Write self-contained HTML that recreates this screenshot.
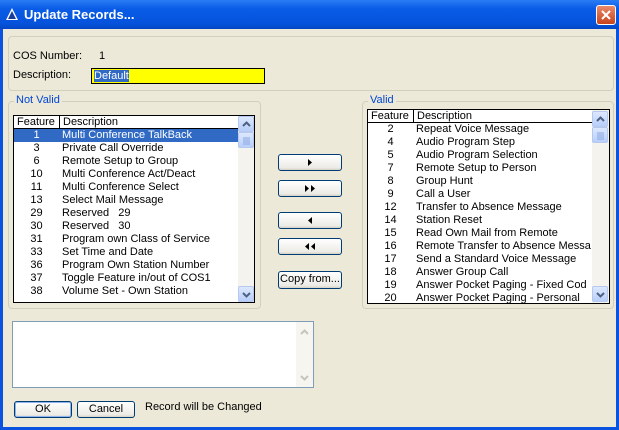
<!DOCTYPE html>
<html><head><style>
*{margin:0;padding:0;box-sizing:border-box}
body{width:619px;height:430px;overflow:hidden;background:#0a53e0;font-family:"Liberation Sans",sans-serif;font-size:11px;color:#000;position:relative}
.a{position:absolute}
#title{left:0;top:0;width:619px;height:29px;background:linear-gradient(#2a7cf4,#0a5ce6 30%,#0553dc 80%,#0346c4);}
#client{left:3px;top:29px;width:613px;height:398px;background:#ece9d8}
.grp{border:1px solid #d0d0bf;border-radius:4px}
.leg{background:#ece9d8;color:#0046d5;padding:0 2px}
.list{background:#fff;border:1px solid #000;overflow:hidden}
.hdr{height:13px;border-bottom:1px solid #000;position:relative;line-height:12px}
.row{height:13px;line-height:13px;position:relative;white-space:nowrap}
.row .n{position:absolute;left:0;text-align:center}
.row .d{position:absolute}
.sel{background:#316ac5;color:#fff}
.sb{background:#f4f3ee;}
.sbtn{width:16px;height:16px;border:1px solid #b5c8f0;border-radius:2px;background:linear-gradient(#dde8fe,#b8cef9)}
.sbtn svg{position:absolute;left:3px;top:3px}
.btn{border:1px solid #003c74;border-radius:3px;background:linear-gradient(#fff,#ecebe6 85%,#d6d0c5);text-align:center;line-height:15px}
</style></head><body>
<div id="title" class="a">
<svg class="a" style="left:5px;top:7px" width="14" height="14"><polygon points="7,1 13,13 1,13" fill="#fff"/><polygon points="7,4 11,12 3,12" fill="#1a3c9a"/></svg>
<div class="a" style="left:24px;top:7px;color:#fff;font-weight:bold;font-size:13px;">Update Records...</div>
<div class="a" style="left:596px;top:5px;width:20px;height:20px;border:1px solid #fff;border-radius:3px;background:linear-gradient(#e88a6a,#c9431c);">
<svg width="18" height="18"><path d="M5 5L13 13M13 5L5 13" stroke="#fff" stroke-width="2"/></svg></div>
</div>
<div id="client" class="a"></div>
<div class="a grp" style="left:8px;top:36px;width:606px;height:55px"></div>
<div class="a" style="left:13px;top:50px">COS Number:</div>
<div class="a" style="left:99px;top:50px">1</div>
<div class="a" style="left:13px;top:69px">Description:</div>
<div class="a" style="left:91px;top:68px;width:174px;height:16px;background:#ff0;border:1px solid #000"><span style="background:#316ac5;color:#fff;position:absolute;left:2px;top:1px;line-height:12px">Default</span></div>

<div class="a grp" style="left:8px;top:101px;width:253px;height:208px"></div>
<div class="a leg" style="left:14px;top:94px">Not Valid</div>
<div class="a list" style="left:13px;top:115px;width:242px;height:188px">
<div class="hdr"><span class="a" style="left:3px">Feature</span><span class="a" style="left:45px;top:0;height:13px;border-left:1px solid #000;padding-left:3px">Description</span></div>
<div id="l1"></div>
<div class="a sb" style="left:224px;top:0;width:17px;height:186px">
<div class="a sbtn" style="left:0;top:0"><svg width="9" height="9"><path d="M1 6L4.5 2.5L8 6" stroke="#4d6185" stroke-width="2" fill="none"/></svg></div>
<div class="a sbtn" style="left:0;top:16px"><svg width="9" height="9"><path d="M1 2H8M1 4H8M1 6H8M1 8H8" stroke="#8aa6e0" stroke-width="1"/></svg></div>
<div class="a sbtn" style="left:0;top:170px"><svg width="9" height="9"><path d="M1 3L4.5 6.5L8 3" stroke="#4d6185" stroke-width="2" fill="none"/></svg></div></div>
</div>

<div class="a grp" style="left:362px;top:101px;width:252px;height:208px"></div>
<div class="a leg" style="left:368px;top:94px">Valid</div>
<div class="a list" style="left:367px;top:109px;width:243px;height:195px">
<div class="hdr"><span class="a" style="left:3px">Feature</span><span class="a" style="left:45px;top:0;height:13px;border-left:1px solid #000;padding-left:3px">Description</span></div>
<div id="l2"></div>
<div class="a sb" style="left:224px;top:0;width:17px;height:193px">
<div class="a sbtn" style="left:0;top:1px"><svg width="9" height="9"><path d="M1 6L4.5 2.5L8 6" stroke="#4d6185" stroke-width="2" fill="none"/></svg></div>
<div class="a sbtn" style="left:0;top:17px"><svg width="9" height="9"><path d="M1 2H8M1 4H8M1 6H8M1 8H8" stroke="#8aa6e0" stroke-width="1"/></svg></div>
<div class="a sbtn" style="left:0;top:176px"><svg width="9" height="9"><path d="M1 3L4.5 6.5L8 3" stroke="#4d6185" stroke-width="2" fill="none"/></svg></div></div>
</div>

<div class="a btn" style="left:278px;top:154px;width:64px;height:17px"><svg width="10" height="15"><path d="M3 4L7 7.5L3 11Z" fill="#000"/></svg></div>
<div class="a btn" style="left:278px;top:180px;width:64px;height:17px"><svg width="14" height="15"><path d="M2 4L6 7.5L2 11ZM8 4L12 7.5L8 11Z" fill="#000"/></svg></div>
<div class="a btn" style="left:278px;top:212px;width:64px;height:17px"><svg width="10" height="15"><path d="M7 4L3 7.5L7 11Z" fill="#000"/></svg></div>
<div class="a btn" style="left:278px;top:238px;width:64px;height:17px"><svg width="14" height="15"><path d="M6 4L2 7.5L6 11ZM12 4L8 7.5L12 11Z" fill="#000"/></svg></div>
<div class="a btn" style="left:278px;top:271px;width:64px;height:18px">Copy from...</div>

<div class="a" style="left:12px;top:321px;width:302px;height:67px;background:#fff;border:1px solid #7f9db9">
<div class="a" style="left:283px;top:0;width:17px;height:65px;background:#f6f5f0">
<svg class="a" style="left:4px;top:6px" width="9" height="9"><path d="M1 6L4.5 2.5L8 6" stroke="#c6c4bb" stroke-width="2" fill="none"/></svg>
<svg class="a" style="left:4px;top:51px" width="9" height="9"><path d="M1 3L4.5 6.5L8 3" stroke="#c6c4bb" stroke-width="2" fill="none"/></svg></div></div>

<div class="a btn" style="left:14px;top:401px;width:58px;height:17px;border-color:#003c74;box-shadow:inset 0 0 0 1px #8fb4f0">OK</div>
<div class="a btn" style="left:77px;top:401px;width:58px;height:17px">Cancel</div>
<div class="a" style="left:145px;top:401px">Record will be Changed</div>

<script>
function fill(id,data,top,w){var h='';data.forEach(function(r,i){h+='<div class="row'+(r[2]?' sel':'')+'" style="width:'+w+'px"><span class="n" style="width:45px">'+r[0]+'</span><span class="d" style="left:48px">'+r[1]+'</span></div>'});document.getElementById(id).innerHTML=h}
fill('l1',[[1,'Multi Conference TalkBack',1],[3,'Private Call Override'],[6,'Remote Setup to Group'],[10,'Multi Conference Act/Deact'],[11,'Multi Conference Select'],[13,'Select Mail Message'],[29,'Reserved&nbsp;&nbsp; 29'],[30,'Reserved&nbsp;&nbsp; 30'],[31,'Program own Class of Service'],[33,'Set Time and Date'],[36,'Program Own Station Number'],[37,'Toggle Feature in/out of COS1'],[38,'Volume Set - Own Station']],0,224);
fill('l2',[[2,'Repeat Voice Message'],[4,'Audio Program Step'],[5,'Audio Program Selection'],[7,'Remote Setup to Person'],[8,'Group Hunt'],[9,'Call a User'],[12,'Transfer to Absence Message'],[14,'Station Reset'],[15,'Read Own Mail from Remote'],[16,'Remote Transfer to Absence Messa'],[17,'Send a Standard Voice Message'],[18,'Answer Group Call'],[19,'Answer Pocket Paging - Fixed Cod'],[20,'Answer Pocket Paging - Personal']],0,224);
</script>
</body></html>
